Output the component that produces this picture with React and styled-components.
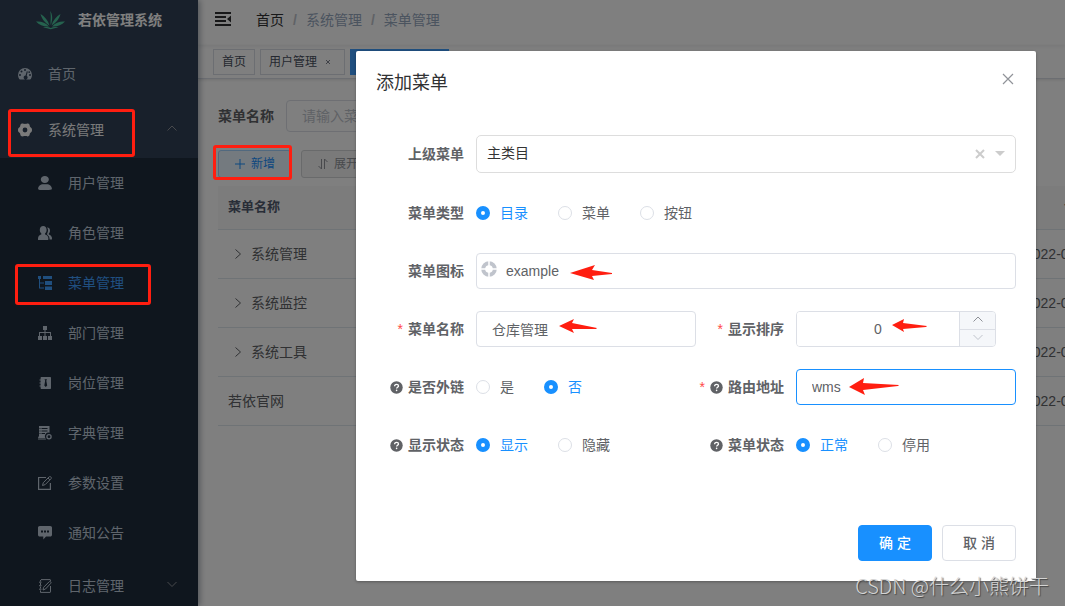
import React from "react";
import styled, { createGlobalStyle, css } from "styled-components";

const GlobalStyle = createGlobalStyle`
  *, *::before, *::after { box-sizing: border-box; }
  body {
    margin: 0;
    background: #fff;
    color: #606266;
    font-family: "Liberation Sans", "Noto Sans CJK SC", sans-serif;
    font-size: 14px;
    line-height: 20px;
  }
  button, input, select { font: inherit; color: inherit; }
  button { cursor: pointer; }
  svg { display: block; flex: none; }
`;

const RED = "#ff1e10";
const BLUE = "#1890ff";

/* ---------- icons ---------- */

const Icon = ({ size = 14, box = 14, children, ...rest }) => (
  <svg width={size} height={size} viewBox={`0 0 ${box} ${box}`} fill="currentColor" aria-hidden="true" {...rest}>
    {children}
  </svg>
);

const Line = ({ d, size = 12, box = 12, width = 1 }) => (
  <Icon size={size} box={box}>
    <path d={d} fill="none" stroke="currentColor" strokeWidth={width} />
  </Icon>
);

const ChevronUp = (p) => <Line d="M1.500 7.500 6 3l4.500 4.500" {...p} />;
const ChevronDown = (p) => <Line d="M1.500 3 6 7.500 10.500 3" {...p} />;
const ChevronRight = (p) => <Line d="M3.500 1.500 8.500 6l-5 4.500" {...p} />;

const DashboardIcon = () => (
  <Icon>
    <path
      fillRule="evenodd"
      d="M7 1a7 7 0 0 0-7 7c0 1.500.400 2.800 1.200 4 .2.300.500.500.800.500h10c.3 0 .6-.2.800-.5.800-1.200 1.200-2.500 1.200-4a7 7 0 0 0-7-7zM2 7a1 1 0 1 1 0 2 1 1 0 0 1 0-2zm1.500-3.500a1 1 0 1 1 0 2 1 1 0 0 1 0-2zM7 2a1 1 0 1 1 0 2 1 1 0 0 1 0-2zm5 5a1 1 0 1 1 0 2 1 1 0 0 1 0-2zM8.800 4.300l1 .3-1.100 4.200a2 2 0 1 1-1.100-.3zM11.200 4.200a.9.9 0 1 1 0 1.800.9.9 0 0 1 0-1.800z"
    />
  </Icon>
);

const GearIcon = () => (
  <Icon>
    <path
      fillRule="evenodd"
      d="M4 .6c.8-.3 1.300.3 3 .3s2.200-.6 3-.3c1 .4 1.600 1 1.700 1.900.1.900.2 1.200 1.100 1.900.9.600 1.200 1.400 1.200 2.600s-.3 2-1.200 2.600c-.9.7-1 1-1.100 1.900-.1.900-.7 1.500-1.700 1.900-.8.300-1.300-.3-3-.3s-2.200.6-3 .3c-1-.4-1.600-1-1.700-1.900-.1-.9-.2-1.200-1.100-1.900C.3 9 0 8.200 0 7s.3-2 1.200-2.600c.9-.7 1-1 1.100-1.900C2.400 1.600 3 1 4 .6zM7 4.600a2.400 2.400 0 1 0 0 4.800 2.400 2.400 0 0 0 0-4.800z"
    />
  </Icon>
);

const UserIcon = () => (
  <Icon box={130}>
    <path d="M63.444 64.996c20.633 0 37.359-14.308 37.359-31.953 0-17.649-16.726-31.952-37.359-31.952-20.631 0-37.360 14.303-37.360 31.952 0 17.645 16.729 31.953 37.360 31.953zM80.570 75.650H49.434c-26.652 0-48.260 18.477-48.260 41.270v2.664c0 9.316 21.608 9.325 48.260 9.325H80.570c26.649 0 48.256-.344 48.256-9.325v-2.663c0-22.794-21.605-41.271-48.256-41.271z" />
  </Icon>
);

const PeoplesIcon = () => (
  <Icon>
    <path d="M5.200 0c2 0 3.400 1.500 3.400 3.700 0 1.600-.6 2.900-1.500 3.600v1.200c2 .6 3 1.700 3.200 3.300.1.800.1 1.400-.1 2.200H.100C-.1 13.200 0 12.600.1 11.800c.2-1.600 1.200-2.700 3.200-3.300V7.300c-.9-.7-1.500-2-1.500-3.600C1.800 1.500 3.200 0 5.200 0z" />
    <path d="M9 1.500c1.700-.2 3 1 3 3.100 0 1.300-.4 2.300-1.200 2.900v.9c1.800.6 2.900 1.700 3.100 3.200.1.700.1 1.100 0 1.900h-2.300c.1-2-.6-3.600-2.400-4.800V7.200c.6-.9.9-2.200.8-3.500C9.900 2.900 9.500 2.100 9 1.500z" />
  </Icon>
);

const TreeTableIcon = () => (
  <Icon>
    <path d="M0 0h3v3H0zM5 0h9v3H5zM7 5h7v4H7zM7 10.500h7V14H7zM1 3h1v8.500h4v1H1zM2 6.500h4v1H2z" />
  </Icon>
);

const TreeIcon = () => (
  <Icon>
    <path d="M5 0h4v4H7.500v2H13v4h1v4h-4v-4h2V7H7.500v3H9v4H5v-4h1.500V7H2v3h2v4H0v-4h1V6h5.500V4H5z" />
  </Icon>
);

const PostIcon = () => (
  <Icon>
    <path
      fillRule="evenodd"
      d="M3.600 1H12c.600 0 1 .4 1 1v10c0 .6-.4 1-1 1H3.600c-.6 0-1-.4-1-1v-1.500H1.500v-1h1.100v-2H1.500v-1h1.100v-2H1.500v-1h1.100V2c0-.6.4-1 1-1zM6.500 3.200 7.200 4.800 6.300 9.500 7.700 11 9.200 9.500 8.300 4.800 9 3.200z"
    />
  </Icon>
);

const DictIcon = () => (
  <Icon>
    <path
      fillRule="evenodd"
      d="M1 0h10.500v6.800A3.600 3.600 0 0 0 7.300 12H.8c-.500 0-.8-.3-.8-.8s.3-.7.800-.7H1zM3.500 2v1h6V2zm0 2.500v1h6v-1zm0 2.500v1H7V7zM1.500 2v1h1V2zm0 2.500v1h1v-1zm0 2.500v1h1V7z"
    />
    <path d="M0 12.500h7.500l.6 1H0z" />
    <circle cx="11" cy="10.800" r="2.100" fill="none" stroke="currentColor" strokeWidth="1.300" />
  </Icon>
);

const EditIcon = () => (
  <Icon>
    <path d="M8 1.500H.600v11.900h11.800V7" fill="none" stroke="currentColor" strokeWidth="1.200" />
    <path d="M4.500 9.500 5.300 6.700 11 1c.6-.6 1.300-.6 1.900 0s.6 1.300 0 1.900L7.200 8.600zM10 2l1.900 1.900" fill="none" stroke="currentColor" />
  </Icon>
);

const MessageIcon = () => (
  <Icon>
    <path
      fillRule="evenodd"
      d="M1.800 0h10.400C13.300 0 14 .8 14 1.800v7c0 1-.7 1.800-1.800 1.800H8L5.300 13.500v-2.900H1.800C.7 10.600 0 9.800 0 8.800v-7C0 .8.7 0 1.800 0zM3 4.500v2h2v-2zm3 0v2h2v-2zm3 0v2h2v-2z"
    />
  </Icon>
);

const LogIcon = () => (
  <Icon>
    <path d="M3 .600h9c.3 0 .500.200.5.500v1M12.500 7v5.900c0 .3-.2.500-.5.500H2.500v-2M2.500 1v1.500M2.500 4v2M2.500 7.500v2M1 3.200h2.500M1 6.700h2.500M1 10.200h2.500" fill="none" stroke="currentColor" />
    <path d="m5 11 .600-2.700 5.500-5.500c.5-.5 1.100-.5 1.600 0s.5 1.100 0 1.600L7.500 10z" fill="none" stroke="currentColor" />
  </Icon>
);

const LogoIcon = () => (
  <svg width="29" height="19" viewBox="0 0 29 19" fill="#4bc49c" aria-hidden="true">
    <path d="M14 0c2.600 3 3 8 .8 14-.8-3 .8-9-.8-14zM4.500 3c4 2.500 7.500 6 9 11.500C9.500 12 6 8.500 4.500 3zM24.500 3c-1.500 5.500-5 9-9 11.500C17 9 20.500 5.500 24.500 3zM0 10.500c5-.5 9.500 1 13 5-4.500.5-9.500-1-13-5zM29 10.500c-3.500 4-8.500 5.500-13 5 3.500-4 8-5.500 13-5zM7 16.500c3-.8 5.500-.6 7.800.4 2.200-1 4.700-1.200 7.700-.4-2.800.3-5.300.8-7.700 1.800-2.400-1-5-1.500-7.800-1.800z" />
  </svg>
);

const FoldIcon = () => (
  <Icon size={16} box={16}>
    <path d="M0 0h16v2H0zM0 4h11v2H0zM0 8h11v2H0zM0 12h16v2H0zM16 3.500v7L12 7z" />
  </Icon>
);

const TagCloseIcon = () => <Line size={16} box={16} d="M6 6l4 4M10 6l-4 4" />;

const QuestionIcon = () => (
  <Icon size={13} box={13}>
    <circle cx="6.500" cy="6.500" r="6.200" />
    <path d="M4.600 5.200c0-1.200.8-1.900 2-1.900s1.900.700 1.900 1.600c0 1.300-1.900 1.400-1.900 2.700" fill="none" stroke="#fff" strokeWidth="1.300" />
    <circle cx="6.600" cy="9.400" r=".8" fill="#fff" />
  </Icon>
);

const ComponentIcon = () => (
  <Icon size={16} box={16}>
    <circle cx="8" cy="8" r="5.800" fill="none" stroke="currentColor" strokeWidth="4" />
    <path d="M8 0v5M8 11v5M0 8h5M11 8h5" stroke="#fff" strokeWidth="1.500" />
  </Icon>
);

/* ---------- page shell ---------- */

const Page = styled.div`
  position: relative;
  display: grid;
  grid-template-columns: 198px minmax(0, 1fr);
  height: 100vh;
  min-height: 606px;
  overflow: hidden;
`;

const Sidebar = styled.nav`
  z-index: 1;
  overflow: hidden;
  background: #304156;
  box-shadow: 2px 0 6px rgba(0, 21, 41, 0.35);
`;

const Brand = styled.a`
  display: flex;
  align-items: center;
  gap: 13px;
  height: 46px;
  padding: 0 0 6px 36px;
  color: #fff;
  font-weight: 700;
  text-decoration: none;
`;

const MenuList = styled.ul`
  margin: 0;
  padding: 0;
  list-style: none;
  background: ${(p) => (p.$nested ? "#1f2d3d" : "transparent")};
`;

const MenuLink = styled.a`
  display: flex;
  align-items: center;
  gap: 16px;
  height: ${(p) => (p.$tall ? 56 : 50)}px;
  padding: 0 20px 0 ${(p) => (p.$nested ? 38 : 18)}px;
  color: ${(p) => (p.$active ? "#409eff" : p.$open ? "#f4f4f5" : "#bfcbd9")};
  text-decoration: none;
`;

const MenuText = styled.span`
  flex: 1;
`;

const MenuArrow = styled.span`
  padding-bottom: 2px;
  color: #909399;
`;

const Main = styled.div`
  overflow: hidden;
`;

const Navbar = styled.header`
  display: flex;
  align-items: center;
  gap: 25px;
  height: 45px;
  padding: 0 17px 6px;
  color: #303133;
  box-shadow: 0 1px 4px rgba(0, 21, 41, 0.08);
`;

const IconButton = styled.button`
  display: flex;
  padding: 0;
  border: 0;
  background: none;
`;

const Breadcrumb = styled.ol`
  display: flex;
  margin: 0;
  padding: 0;
  list-style: none;
  color: #97a8be;

  li + li::before {
    content: "/";
    margin: 0 9px;
    color: #c0c4cc;
    font-weight: 700;
  }
  a {
    color: #303133;
    text-decoration: none;
  }
`;

const TagsBar = styled.div`
  display: flex;
  gap: 5px;
  height: 34px;
  padding: 4px 15px 0;
  border-bottom: 1px solid #d8dce5;
  box-shadow: 0 1px 3px rgba(0, 0, 0, 0.12);
`;

const Tag = styled.a`
  display: flex;
  align-items: center;
  gap: 3px;
  height: 26px;
  padding: 0 8px;
  border: 1px solid ${(p) => (p.$active ? "#409eff" : "#d8dce5")};
  background: ${(p) => (p.$active ? "#409eff" : "#fff")};
  color: ${(p) => (p.$active ? "#fff" : "#495060")};
  font-size: 12px;
  text-decoration: none;

  svg { opacity: 0.7; }
`;

const Dot = styled.span`
  width: 8px;
  height: 8px;
  margin-right: 3px;
  border-radius: 50%;
  background: #fff;
`;

const Content = styled.main`
  padding: 21px 20px;
`;

const SearchForm = styled.form`
  display: flex;
  align-items: center;
  gap: 12px;
  margin-bottom: 18px;

  label { font-weight: 700; }
`;

const SearchInput = styled.input`
  width: 240px;
  height: 32px;
  padding: 0 15px;
  border: 1px solid #dcdfe6;
  border-radius: 4px;
  &::placeholder { color: #bfc4cc; }
`;

const Toolbar = styled.div`
  display: flex;
  gap: 10px;
  margin-bottom: 8px;
`;

const toolColors = {
  primary: css`
    border-color: #a3d3ff;
    background: #e8f4ff;
    color: ${BLUE};
  `,
  info: css`
    border-color: #d3d4d6;
    background: #f4f4f5;
    color: #909399;
  `,
};

const ToolButton = styled.button`
  display: flex;
  align-items: center;
  gap: 5px;
  height: 28px;
  padding: 0 15px;
  border: 1px solid;
  border-radius: 3px;
  font-size: 12px;
  white-space: nowrap;
  ${(p) => toolColors[p.$kind]}
`;

const Table = styled.table`
  width: 100%;
  min-width: 952px;
  border-collapse: collapse;
  table-layout: fixed;

  th, td {
    padding: 0 10px;
    border-bottom: 1px solid #dfe6ec;
    text-align: left;
    white-space: nowrap;
  }
  th {
    height: 43px;
    background: #f8f8f9;
    color: #515a6e;
    font-size: 13px;
  }
  td { height: 49px; }
  th:last-child, td:last-child {
    width: 160px;
    text-align: center;
  }
`;

const TreeCell = styled.div`
  display: flex;
  align-items: center;
  gap: 7px;
  padding-left: ${(p) => (p.$branch ? 4 : 0)}px;
`;

/* ---------- dialog ---------- */

const Scrim = styled.div`
  position: absolute;
  inset: 0;
  z-index: 2;
  display: flex;
  justify-content: flex-end;
  align-items: flex-start;
  padding: 51px 29px 25px;
  background: rgba(0, 0, 0, 0.5);
`;

const Dialog = styled.section`
  width: 680px;
  max-width: 100%;
  border-radius: 2px;
  background: #fff;
  box-shadow: 0 1px 3px rgba(0, 0, 0, 0.3);
`;

const DialogHeader = styled.header`
  display: flex;
  align-items: flex-start;
  justify-content: space-between;
  padding: 20px 20px 10px;

  h2 {
    margin: 0;
    color: #303133;
    font-size: 18px;
    font-weight: 400;
    line-height: 24px;
  }
  button { color: #909399; }
`;

const Form = styled.form`
  display: grid;
  grid-template-columns: 1fr 1fr;
  row-gap: 22px;
  padding: 30px 20px 52px;
`;

const Field = styled.div`
  display: flex;
  align-items: center;
  min-height: 36px;
  grid-column: ${(p) => (p.$wide ? "1 / -1" : "auto")};
`;

const FieldLabel = styled.label`
  display: flex;
  justify-content: flex-end;
  align-items: center;
  flex: none;
  gap: 5px;
  width: 100px;
  padding-right: 12px;
  font-weight: 700;
  white-space: nowrap;
`;

const Star = styled.span`
  color: #ff4949;
  font-weight: 400;
`;

const Control = styled.div`
  position: relative;
  display: flex;
  flex: 1;
  min-width: 0;
`;

const TextInput = styled.input`
  width: 100%;
  height: 36px;
  padding: 0 15px 0 ${(p) => (p.$icon ? 29 : 15)}px;
  border: 1px solid ${(p) => (p.$focused ? BLUE : "#dcdfe6")};
  border-radius: 4px;
  outline: 0;
  background: #fff;
`;

const InputIcon = styled.span`
  position: absolute;
  top: 8px;
  left: 5px;
  color: #c0c4cc;
`;

const Select = styled.select`
  width: 100%;
  height: 38px;
  padding: 0 64px 2px 10px;
  border: 1px solid #ddd;
  border-radius: 5px;
  appearance: none;
  background: #fff;
  color: #333;
`;

const SelectTools = styled.span`
  position: absolute;
  top: 0;
  right: 10px;
  display: flex;
  align-items: center;
  gap: 8px;
  height: 38px;
  color: #ccc;
`;

const NumberBox = styled.div`
  display: flex;
  width: 200px;
  height: 36px;
  overflow: hidden;
  border: 1px solid #dcdfe6;
  border-radius: 4px;

  input {
    flex: 1;
    min-width: 0;
    padding: 0;
    border: 0;
    outline: 0;
    text-align: center;
    appearance: textfield;
  }
  input::-webkit-inner-spin-button { display: none; }
`;

const Stepper = styled.div`
  display: flex;
  flex-direction: column;
  width: 36px;
  border-left: 1px solid #dcdfe6;
  background: #f5f7fa;

  button {
    display: flex;
    flex: 1;
    align-items: center;
    justify-content: center;
    padding: 0;
    border: 0;
    background: none;
    color: #8d9096;
  }
  button + button {
    border-top: 1px solid #dcdfe6;
    color: #c0c4cc;
  }
`;

const RadioSet = styled.div`
  display: flex;
  gap: 30px;
`;

const RadioLabel = styled.label`
  display: flex;
  align-items: center;
  gap: 10px;

  &:has(input:checked) { color: ${BLUE}; }

  input {
    width: 14px;
    height: 14px;
    margin: 0;
    border: 1px solid #dcdfe6;
    border-radius: 50%;
    appearance: none;
    background: #fff;
  }
  input:checked { border: 5px solid ${BLUE}; }
`;

const DialogFooter = styled.footer`
  display: flex;
  justify-content: flex-end;
  gap: 10px;
  padding: 10px 20px 20px;
`;

const Button = styled.button`
  width: 74px;
  height: 36px;
  padding: 0;
  border: 1px solid ${(p) => (p.$primary ? BLUE : "#dcdfe6")};
  border-radius: 4px;
  background: ${(p) => (p.$primary ? BLUE : "#fff")};
  color: ${(p) => (p.$primary ? "#fff" : "#606266")};
  font-weight: 500;
`;

/* ---------- annotations over the page ---------- */

const Mark = styled.div`
  position: absolute;
  z-index: 3;
  top: ${(p) => p.$y}px;
  left: ${(p) => p.$x}px;
  width: ${(p) => p.$w}px;
  height: ${(p) => p.$h}px;
  border: 3px solid ${RED};
  border-radius: 3px;
  pointer-events: none;
`;

const ArrowMark = styled.svg`
  position: absolute;
  z-index: 3;
  top: ${(p) => p.$y}px;
  left: ${(p) => p.$x}px;
  fill: ${RED};
  pointer-events: none;
`;

const Watermark = styled.div`
  position: absolute;
  z-index: 4;
  right: 16px;
  bottom: 6px;
  color: #d4d4d4;
  font-family: "Noto Sans CJK SC", sans-serif;
  font-size: 20px;
  font-weight: 300;
  line-height: 28px;
  text-shadow: 1px 1px 1px #444;
`;

const subMenu = [
  ["用户管理", UserIcon],
  ["角色管理", PeoplesIcon],
  ["菜单管理", TreeTableIcon],
  ["部门管理", TreeIcon],
  ["岗位管理", PostIcon],
  ["字典管理", DictIcon],
  ["参数设置", EditIcon],
  ["通知公告", MessageIcon],
  ["日志管理", LogIcon],
];

const rows = [
  ["系统管理", true],
  ["系统监控", true],
  ["系统工具", true],
  ["若依官网", false],
];

const arrows = [
  { x: 570, y: 265, w: 42, h: 15, points: "0,8 25,0 22,5 42,8 42,9 22,11 24,15" },
  { x: 559, y: 319, w: 38, h: 14, points: "0,7 15,0 13,4 38,9 37,10 13,10 15,14" },
  { x: 892, y: 319, w: 35, h: 14, points: "0,6 12,0 11,4 35,7 34,8 11,10 12,13" },
  { x: 849, y: 378, w: 50, h: 18, points: "0,9 15,0 14,5 50,7 49,8 14,12 16,17" },
];

function Label({ text, required, help, htmlFor, id }) {
  return (
    <FieldLabel htmlFor={htmlFor} id={id} as={htmlFor ? "label" : "span"}>
      {required && <Star>*</Star>}
      {help && <QuestionIcon />}
      {text}
    </FieldLabel>
  );
}

function RadioField({ name, label, options, value, help, wide }) {
  return (
    <Field $wide={wide}>
      <Label text={label} help={help} id={`${name}-label`} />
      <RadioSet role="radiogroup" aria-labelledby={`${name}-label`}>
        {options.map((o) => (
          <RadioLabel key={o}>
            <input type="radio" name={name} defaultChecked={o === value} />
            {o}
          </RadioLabel>
        ))}
      </RadioSet>
    </Field>
  );
}

export default function App() {
  return (
    <Page>
      <GlobalStyle />
      <Sidebar>
        <Brand href="#">
          <LogoIcon />
          若依管理系统
        </Brand>
        <MenuList>
          <li>
            <MenuLink href="#" $tall>
              <DashboardIcon />
              <MenuText>首页</MenuText>
            </MenuLink>
          </li>
          <li>
            <MenuLink href="#" $tall $open>
              <GearIcon />
              <MenuText>系统管理</MenuText>
              <MenuArrow><ChevronUp /></MenuArrow>
            </MenuLink>
            <MenuList $nested>
              {subMenu.map(([text, Glyph]) => (
                <li key={text}>
                  <MenuLink href="#" $nested $active={text === "菜单管理"} $tall={text === "日志管理"}>
                    <Glyph />
                    <MenuText>{text}</MenuText>
                    {text === "日志管理" && <MenuArrow><ChevronDown /></MenuArrow>}
                  </MenuLink>
                </li>
              ))}
            </MenuList>
          </li>
        </MenuList>
      </Sidebar>

      <Main>
        <Navbar>
          <IconButton aria-label="fold">
            <FoldIcon />
          </IconButton>
          <Breadcrumb>
            <li><a href="#">首页</a></li>
            <li>系统管理</li>
            <li>菜单管理</li>
          </Breadcrumb>
        </Navbar>
        <TagsBar>
          <Tag href="#">首页</Tag>
          <Tag href="#">
            用户管理
            <TagCloseIcon />
          </Tag>
          <Tag href="#" $active>
            <Dot />
            菜单管理
            <TagCloseIcon />
          </Tag>
        </TagsBar>
        <Content>
          <SearchForm>
            <label htmlFor="search-name">菜单名称</label>
            <SearchInput id="search-name" placeholder="请输入菜单名称" />
          </SearchForm>
          <Toolbar>
            <ToolButton $kind="primary">
              <Line d="M6 1v10M1 6h10" />
              新增
            </ToolButton>
            <ToolButton $kind="info">
              <Line d="M4.500 1v10L1.500 8M7.500 11V1l3 3" />
              展开/折叠
            </ToolButton>
          </Toolbar>
          <Table>
            <thead>
              <tr>
                <th>菜单名称</th>
                <th>创建时间</th>
              </tr>
            </thead>
            <tbody>
              {rows.map(([name, branch]) => (
                <tr key={name}>
                  <td>
                    <TreeCell $branch={branch}>
                      {branch && <ChevronRight />}
                      {name}
                    </TreeCell>
                  </td>
                  <td>2022-02-21 17:29:35</td>
                </tr>
              ))}
            </tbody>
          </Table>
        </Content>
      </Main>

      <Scrim>
        <Dialog role="dialog" aria-labelledby="dialog-title">
          <DialogHeader>
            <h2 id="dialog-title">添加菜单</h2>
            <IconButton aria-label="close">
              <Line size={16} box={16} d="M3 3l10 10M13 3 3 13" width={1.2} />
            </IconButton>
          </DialogHeader>
          <Form>
            <Field $wide>
              <Label text="上级菜单" htmlFor="parent" />
              <Control>
                <Select id="parent">
                  <option>主类目</option>
                </Select>
                <SelectTools>
                  <Line size={12} d="M2 2l8 8M10 2l-8 8" width={2} />
                  <Icon size={12} box={12}>
                    <path d="M1 3h10L6 8z" />
                  </Icon>
                </SelectTools>
              </Control>
            </Field>
            <RadioField wide name="type" label="菜单类型" options={["目录", "菜单", "按钮"]} value="目录" />
            <Field $wide>
              <Label text="菜单图标" htmlFor="icon" />
              <Control>
                <TextInput id="icon" defaultValue="example" $icon />
                <InputIcon><ComponentIcon /></InputIcon>
              </Control>
            </Field>
            <Field>
              <Label text="菜单名称" required htmlFor="name" />
              <Control>
                <TextInput id="name" defaultValue="仓库管理" />
              </Control>
            </Field>
            <Field>
              <Label text="显示排序" required htmlFor="order" />
              <NumberBox>
                <input id="order" type="number" min="0" defaultValue="0" />
                <Stepper>
                  <button type="button" aria-label="increase"><ChevronUp size={12} /></button>
                  <button type="button" aria-label="decrease"><ChevronDown size={12} /></button>
                </Stepper>
              </NumberBox>
            </Field>
            <RadioField name="frame" label="是否外链" help options={["是", "否"]} value="否" />
            <Field>
              <Label text="路由地址" required help htmlFor="path" />
              <Control>
                <TextInput id="path" defaultValue="wms" $focused />
              </Control>
            </Field>
            <RadioField name="visible" label="显示状态" help options={["显示", "隐藏"]} value="显示" />
            <RadioField name="status" label="菜单状态" help options={["正常", "停用"]} value="正常" />
          </Form>
          <DialogFooter>
            <Button type="button" $primary>确 定</Button>
            <Button type="button">取 消</Button>
          </DialogFooter>
        </Dialog>
      </Scrim>

      <Mark $x={8} $y={109} $w={127} $h={48} />
      <Mark $x={15} $y={264} $w={136} $h={41} />
      <Mark $x={213} $y={145} $w={79} $h={35} />
      {arrows.map((a) => (
        <ArrowMark key={a.y + a.x} $x={a.x} $y={a.y} width={a.w} height={a.h} viewBox={`0 0 ${a.w} ${a.h}`} aria-hidden="true">
          <polygon points={a.points} />
        </ArrowMark>
      ))}
      <Watermark>CSDN @什么小熊饼干</Watermark>
    </Page>
  );
}
